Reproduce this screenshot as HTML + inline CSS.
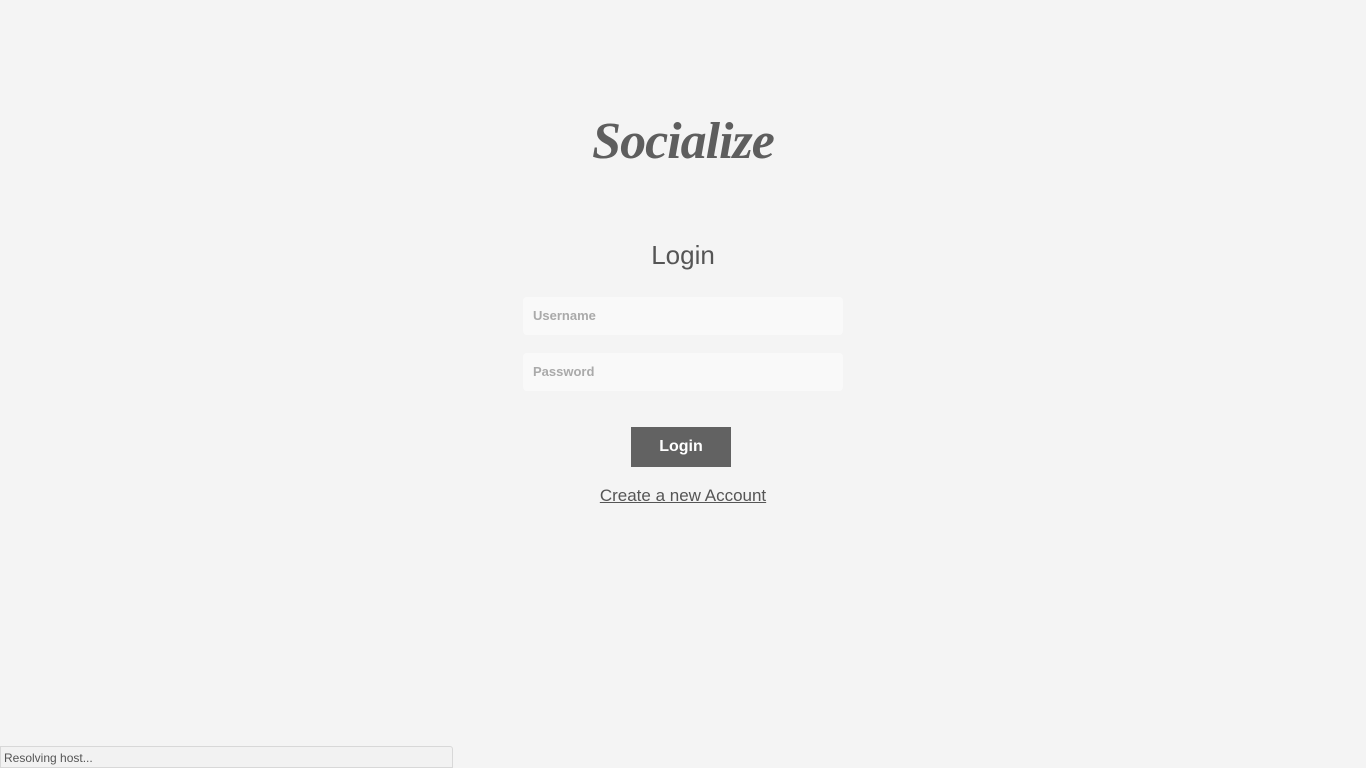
<!DOCTYPE html>
<html><head><meta charset="utf-8"><style>
html,body{margin:0;padding:0;width:1366px;height:768px;background:#f4f4f4;overflow:hidden;font-family:"Liberation Sans",sans-serif;position:relative}
.logo{position:absolute;left:0;width:1366px;top:112px;text-align:center;font-family:"Liberation Serif",serif;font-style:italic;font-weight:bold;font-size:52px;color:#5e5e5e;letter-spacing:-1px}
h1{position:absolute;left:0;width:1366px;top:240px;margin:0;text-align:center;font-weight:normal;font-size:26px;color:#555;line-height:30px}
.in{position:absolute;left:523px;width:320px;height:38px;background:#f9f9f9;border-radius:4px;box-sizing:border-box;padding-left:10px;line-height:38px;font-size:13px;font-weight:bold;color:#aaa}
.btn{position:absolute;left:631px;top:427px;width:100px;height:40px;background:#626262;color:#fff;font-weight:bold;font-size:16px;line-height:40px;text-align:center}
.lnk{position:absolute;left:0;width:1366px;top:486px;text-align:center;font-size:17px;color:#555;line-height:20px}
.lnk span{text-decoration:underline}
.st{position:absolute;left:0;top:746px;width:453px;height:22px;background:#f2f2f2;border:1px solid #d8d8d8;border-radius:0 3px 0 0;box-sizing:border-box;font-size:12px;color:#555;padding-left:3px;line-height:22px}
</style></head><body>
<div class="logo">Socialize</div>
<h1>Login</h1>
<div class="in" style="top:297px">Username</div>
<div class="in" style="top:353px">Password</div>
<div class="btn">Login</div>
<div class="lnk"><span>Create a new Account</span></div>
<div class="st">Resolving host...</div>
</body></html>
